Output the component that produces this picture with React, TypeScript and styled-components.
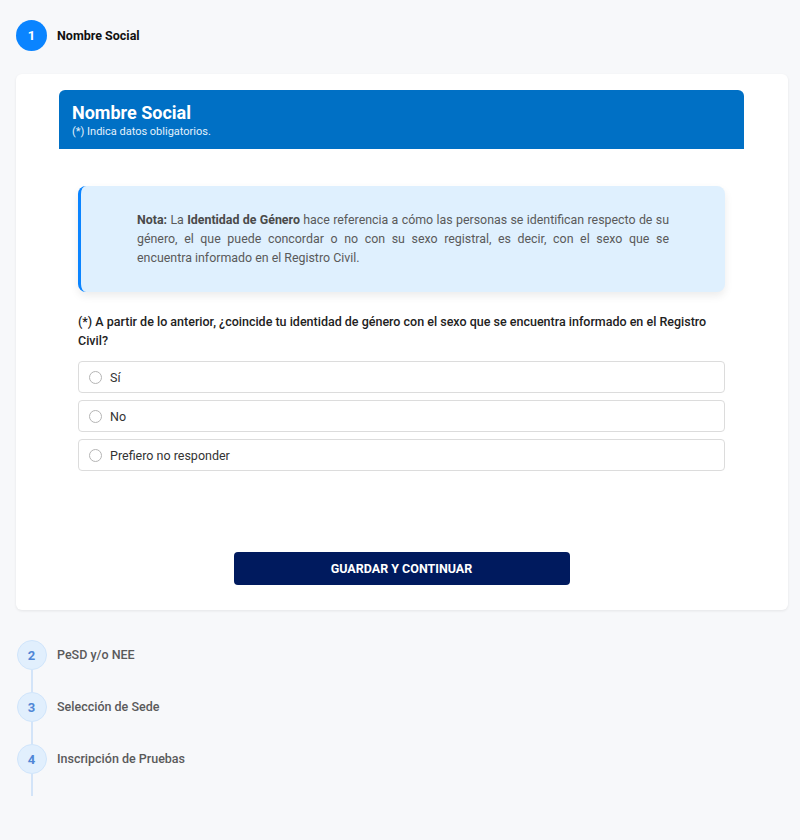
import styled, { createGlobalStyle } from "styled-components";

const GlobalStyle = createGlobalStyle`
  body {
    margin: 0;
    background: #f7f8fa;
    font-family: Roboto, "Liberation Sans", Arial, sans-serif;
    color: #222;
  }
`;

const Page = styled.div`
  padding: 20px 12px 16px 16px;
  min-height: 840px;
  box-sizing: border-box;
`;

const StepRow = styled.div`
  display: flex;
  align-items: center;
  gap: 10px;
`;

const StepMarker = styled.div`
  display: flex;
  flex-direction: column;
  align-items: center;
  width: 31px;
`;

const StepCircle = styled.div<{ $active?: boolean }>`
  width: ${(p) => (p.$active ? "31px" : "30px")};
  height: ${(p) => (p.$active ? "31px" : "30px")};
  border-radius: 50%;
  box-sizing: border-box;
  display: flex;
  align-items: center;
  justify-content: center;
  font-size: 13px;
  font-weight: 700;
  background: ${(p) => (p.$active ? "#0a84ff" : "#e1effd")};
  border: ${(p) => (p.$active ? "none" : "1.5px solid #d0e5fb")};
  color: ${(p) => (p.$active ? "#fff" : "#4f86d6")};
`;

const Connector = styled.div`
  width: 2px;
  height: 22px;
  background: #d3e4f8;
`;

const PendingStep = styled.div`
  display: flex;
  gap: 10px;
`;

const StepLabel = styled.span<{ $active?: boolean }>`
  font-size: 12.5px;
  font-weight: ${(p) => (p.$active ? 700 : 500)};
  color: ${(p) => (p.$active ? "#111" : "#5a5a5a")};
  line-height: 30px;
`;

const Card = styled.div`
  margin: 23px 0 30px;
  background: #fff;
  border-radius: 6px;
  box-shadow: 0 1px 3px rgba(0, 0, 0, 0.08);
  padding: 16px 44px 25px 43px;
`;

const Header = styled.div`
  background: #0070c5;
  border-radius: 6px 6px 0 0;
  padding: 12px 13px 10px;
  color: #fff;
`;

const HeaderTitle = styled.h2`
  margin: 0;
  font-size: 18px;
  font-weight: 700;
  line-height: 22px;
`;

const HeaderSub = styled.div`
  font-size: 11px;
  line-height: 15px;
  color: #e3f0fb;
`;

const Body = styled.div`
  padding: 37px 19px 0;
`;

const Note = styled.div`
  background: #dff0fe;
  border-left: 3px solid #0a84ff;
  border-radius: 8px;
  box-shadow: 0 4px 8px rgba(0, 0, 0, 0.08);
  padding: 24px 56px 25px;
  font-size: 12.4px;
  line-height: 19px;
  color: #5a5a5a;
  text-align: justify;

  b {
    font-weight: 700;
    color: #4a4a4a;
  }
`;

const Question = styled.p`
  margin: 20px 0 11px;
  font-size: 12.5px;
  font-weight: 500;
  line-height: 19px;
  color: #222;
`;

const Options = styled.div`
  display: flex;
  flex-direction: column;
  gap: 7px;
`;

const Option = styled.label`
  display: flex;
  align-items: center;
  gap: 8px;
  height: 32px;
  box-sizing: border-box;
  border: 1px solid #dcdcdc;
  border-radius: 4px;
  padding: 0 10px;
  font-size: 12.5px;
  color: #333;
`;

const Radio = styled.span`
  width: 13px;
  height: 13px;
  border-radius: 50%;
  border: 1px solid #b5b5b5;
  box-sizing: border-box;
  background: #fff;
`;

const Actions = styled.div`
  display: flex;
  justify-content: center;
  margin-top: 81px;
`;

const PrimaryButton = styled.button`
  width: 336px;
  height: 33px;
  border: none;
  border-radius: 4px;
  background: #001a5e;
  color: #fff;
  font-family: inherit;
  font-size: 12.5px;
  font-weight: 700;
  text-transform: uppercase;
  cursor: pointer;
`;

const pending = [
  { n: 2, label: "PeSD y/o NEE" },
  { n: 3, label: "Selección de Sede" },
  { n: 4, label: "Inscripción de Pruebas" },
];

const answers = ["Sí", "No", "Prefiero no responder"];

export default function App() {
  return (
    <>
      <GlobalStyle />
      <Page>
        <StepRow>
          <StepCircle $active>1</StepCircle>
          <StepLabel $active>Nombre Social</StepLabel>
        </StepRow>

        <Card>
          <Header>
            <HeaderTitle>Nombre Social</HeaderTitle>
            <HeaderSub>(*) Indica datos obligatorios.</HeaderSub>
          </Header>
          <Body>
            <Note>
              <b>Nota:</b> La <b>Identidad de Género</b> hace referencia a cómo
              las personas se identifican respecto de su género, el que puede
              concordar o no con su sexo registral, es decir, con el sexo que se
              encuentra{"\u00a0"}informado en el Registro Civil.
            </Note>
            <Question>
              (*) A partir de lo anterior, ¿coincide tu identidad de género con
              el sexo que se encuentra informado en el Registro Civil?
            </Question>
            <Options>
              {answers.map((a) => (
                <Option key={a}>
                  <Radio />
                  {a}
                </Option>
              ))}
            </Options>
            <Actions>
              <PrimaryButton>Guardar y continuar</PrimaryButton>
            </Actions>
          </Body>
        </Card>

        {pending.map((s) => (
          <PendingStep key={s.n}>
            <StepMarker>
              <StepCircle>{s.n}</StepCircle>
              <Connector />
            </StepMarker>
            <StepLabel>{s.label}</StepLabel>
          </PendingStep>
        ))}
      </Page>
    </>
  );
}
